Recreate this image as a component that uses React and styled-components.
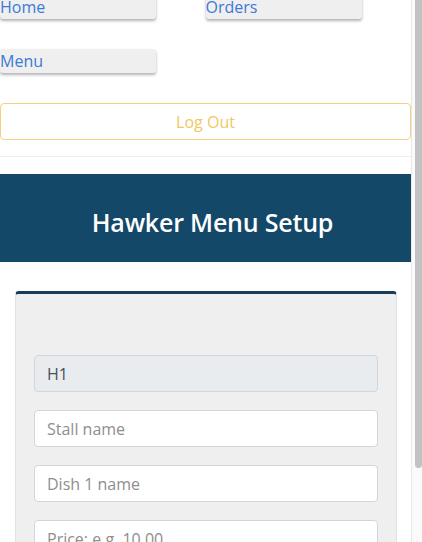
import React, { useState } from 'react';
import styled, { createGlobalStyle } from 'styled-components';

const GlobalStyle = createGlobalStyle`
    html, body {
        margin: 0;
        padding: 0;
        background: #ffffff;
        overflow: hidden;
    }
    body {
        font-family: 'Open Sans', 'Noto Sans', sans-serif;
    }
    * {
        box-sizing: border-box;
    }
`;

const Frame = styled.div`
    display: flex;
    width: 422px;
    height: 542px;
    overflow: hidden;
`;

const Page = styled.div`
    flex: 1;
    min-width: 0;
    margin-top: -5px; /* page is scrolled a little */
`;

const ScrollTrack = styled.div`
    width: 11px;
    flex-shrink: 0;
    background: #fafafa;
    border-left: 1px solid #e8e8e8;
    padding: 0 0 0 3px;
`;

const ScrollThumb = styled.div`
    width: 7px;
    height: 468px;
    background: #c2c2c2;
    border-radius: 0 0 4px 4px;
`;

const NavGrid = styled.div`
    display: grid;
    grid-template-columns: 1fr 1fr;
    row-gap: 30px;
`;

const NavButton = styled.button`
    width: 156px;
    height: 24px;
    padding: 0;
    border: none;
    border-radius: 3px;
    background: #efefef;
    box-shadow: 0 2px 3px rgba(0, 0, 0, 0.3);
    color: #3b7ad6;
    font-family: 'Open Sans', sans-serif;
    font-size: 16px;
    line-height: 24px;
    text-align: left;
    cursor: pointer;
`;

const LogOutButton = styled.button`
    display: block;
    width: 100%;
    height: 37px;
    margin-top: 30px;
    border: 1px solid #f2d27c;
    border-radius: 4px;
    background: #ffffff;
    color: #f0c764;
    font-family: 'Open Sans', sans-serif;
    font-size: 16px;
    cursor: pointer;
`;

const Divider = styled.hr`
    margin: 16px 0 0;
    border: none;
    border-top: 1px solid #eeeeee;
`;

const Header = styled.header`
    margin-top: 17px;
    height: 88px;
    background: #134869;
    color: #ffffff;
    display: flex;
    align-items: center;
    justify-content: center;
    padding: 7px 0 0 14px;
`;

const Title = styled.h1`
    margin: 0;
    font-size: 25px;
    font-weight: 600;
    letter-spacing: -0.2px;
`;

const Card = styled.div`
    margin: 29px 14px 0 15px;
    background: #efefef;
    border: 1px solid #e2e2e2;
    border-top: 3px solid #173d5c;
    border-radius: 4px;
    padding: 61px 18px 18px;
    display: flex;
    flex-direction: column;
    gap: 18px;
`;

const Field = styled.input`
    width: 100%;
    height: 37px;
    padding: 0 12px;
    border: 1px solid #d2d6db;
    border-radius: 4px;
    background: ${(props) => (props.disabled ? '#e9ecef' : '#ffffff')};
    color: #495057;
    font-family: 'Open Sans', sans-serif;
    font-size: 16px;

    &::placeholder {
        color: #8e8e8e;
    }
`;

function App() {
    const [stall, setStall] = useState('');
    const [dish, setDish] = useState('');
    const [price, setPrice] = useState('');

    return (
        <Frame>
            <GlobalStyle />
            <Page>
                <NavGrid>
                    <NavButton>Home</NavButton>
                    <NavButton>Orders</NavButton>
                    <NavButton>Menu</NavButton>
                </NavGrid>
                <LogOutButton>Log Out</LogOutButton>
                <Divider />
                <Header>
                    <Title>Hawker Menu Setup</Title>
                </Header>
                <Card>
                    <Field value='H1' disabled readOnly />
                    <Field
                        placeholder='Stall name'
                        value={stall}
                        onChange={(event) => setStall(event.target.value)}
                    />
                    <Field
                        placeholder='Dish 1 name'
                        value={dish}
                        onChange={(event) => setDish(event.target.value)}
                    />
                    <Field
                        placeholder='Price: e.g. 10.00'
                        value={price}
                        onChange={(event) => setPrice(event.target.value)}
                    />
                </Card>
            </Page>
            <ScrollTrack>
                <ScrollThumb />
            </ScrollTrack>
        </Frame>
    );
}

export default App;
